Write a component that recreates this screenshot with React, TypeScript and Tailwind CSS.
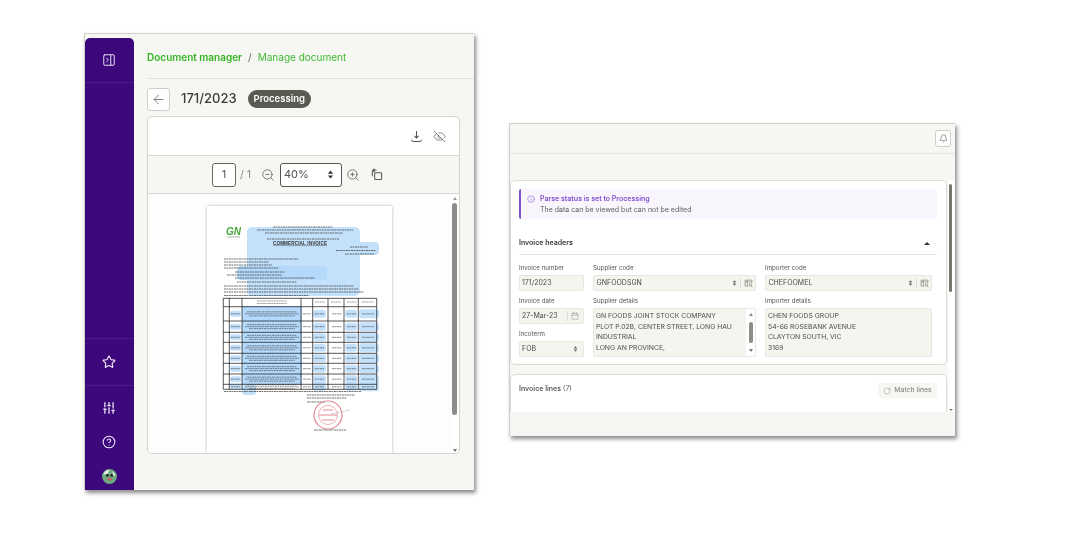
import { ArrowLeft, Bell, Calendar, CircleHelp, EyeOff, Info, PanelRightClose, RotateCw, SlidersVertical, Star, ZoomIn, ZoomOut } from 'lucide-react';

const ROW_Y = [92.3, 100.7, 115, 126.3, 136.3, 147.3, 157.3, 168, 178.3, 183.3];
const COL_X = [16.3, 22.3, 35, 94, 105.7, 121, 137, 151.3, 169.7];

function Updown({ className = '' }: { className?: string }) {
  return (
    <svg viewBox="0 0 8 10" className={className} fill="currentColor">
      <path d="M4 0.5 7 4H1zM4 9.5 1 6h6z" />
    </svg>
  );
}

function Lookup() {
  return (
    <svg viewBox="0 0 12 12" className="w-[9px] h-[9px] text-[#8a8a82]" fill="none" stroke="currentColor" strokeWidth="1">
      <path d="M10.5 5V1.5h-9v8H5M1.5 4h9M4.5 1.5v8" />
      <circle cx="8.5" cy="8" r="1.7" />
      <path d="m10 9.5 1.4 1.4" />
    </svg>
  );
}

function InvoicePage() {
  const lines: [number, number, number][] = [
    [66, 21, 60], [50, 24, 96], [58, 27, 78], [60, 33, 72],
    [143, 41, 18], [129, 44.5, 40], [138, 48, 30],
    [17, 53, 75], [17, 56, 45], [17, 59, 48], [17, 62, 55],
    [28, 66, 50], [20, 69, 55], [28, 72, 80], [30, 76, 60],
    [17, 80, 130], [17, 83, 135], [17, 86, 140], [17, 89.5, 85],
    [17, 185.5, 137], [100, 189, 48], [100, 192, 40], [100, 196, 18], [107, 224, 32],
  ];
  const rowMid = ROW_Y.slice(1, 9).map((y, i) => (y + ROW_Y[i + 2]) / 2);
  return (
    <svg viewBox="0 0 185 248" className="w-[185px] h-[248px] shrink-0 blur-[0.4px]">
      <rect width="185" height="248" fill="#fff" />
      <rect x="40" y="21" width="113" height="69" rx="5" fill="#c3e1fb" />
      <rect x="151" y="36" width="21" height="13" rx="4" fill="#c3e1fb" />
      <rect x="30" y="60" width="90" height="14" rx="4" fill="#b4d9fb" />
      <rect x="35" y="100" width="60" height="79" fill="#b4d9fb" />
      <rect x="35" y="179" width="14" height="10" rx="3" fill="#c3e1fb" />
      {rowMid.map(y => (
        <g key={y} fill="#c3e1fb">
          <rect x="106" y={y - 4} width="13" height="8" rx="3" />
          <rect x="138" y={y - 4} width="12" height="8" rx="3" />
          <rect x="152" y={y - 4.5} width="20" height="9" rx="3" />
          <rect x="23" y={y - 3} width="11" height="6" rx="2" />
        </g>
      ))}
      <text x="19" y="29" fontFamily="Liberation Sans" fontSize="10" fontStyle="italic" fontWeight="700" fill="#4aa63e">GN</text>
      <path d="M20 31h13" stroke="#7a9a80" strokeWidth=".7" />
      <text x="66" y="38.5" fontFamily="Liberation Sans" fontSize="4.6" fontWeight="700" fill="#333" textLength="54">COMMERCIAL INVOICE</text>
      <path d="M66 39.6h54" stroke="#333" strokeWidth=".4" />
      {lines.map(([x, y, w]) => (
        <path key={`${x}-${y}`} d={`M${x} ${y}h${w}`} stroke="#333" strokeWidth=".9" strokeDasharray="2.5 .4 1.5 .6" opacity=".75" />
      ))}
      <path d="M50 95h30M50 97.5h30M108 96h10M124 96h10M140 96h9M155 96h12" stroke="#444" strokeWidth=".8" strokeDasharray="2 .4" opacity=".6" />
      {ROW_Y.map(y => <path key={y} d={`M16.3 ${y}H169.7`} stroke="#111" strokeWidth=".7" />)}
      {COL_X.map(x => <path key={x} d={`M${x} 92.3V183.3`} stroke="#111" strokeWidth=".7" />)}
      {rowMid.map(y => (
        <g key={y} stroke="#333" strokeWidth=".8" opacity=".7" strokeDasharray="2.5 .4 1.5 .6">
          <path d={`M40 ${y - 2}h50M38 ${y}h54M42 ${y + 2}h46`} />
          <path d={`M24 ${y}h9M96 ${y}h8M108 ${y}h9M125 ${y}h10M140 ${y}h9M155 ${y}h12`} />
        </g>
      ))}
      <g fill="none" stroke="#e58b92">
        <circle cx="121" cy="209" r="14" strokeWidth="1.2" />
        <circle cx="121" cy="209" r="9.5" strokeWidth=".7" />
        <path d="M112 209h18M116 204h10M115 214h12" strokeWidth="1" />
        <path d="M124 208 143 204" stroke="#aab" strokeWidth=".5" />
      </g>
    </svg>
  );
}

function Field({ label, children, className = '' }: { label: string; children: React.ReactNode; className?: string }) {
  return (
    <div className={className}>
      <div className="text-[6.2px] leading-[10px] text-[#55554f] mb-[2px]">{label}</div>
      {children}
    </div>
  );
}

const boxCls = 'h-[16px] bg-[#f5f5f0] border border-[#e8e8e2] rounded-[2px] flex items-center text-[7px] text-[#4c4c47] px-[2px]';

function CodeBox({ value }: { value: string }) {
  return (
    <div className={boxCls}>
      <span className="flex-1 pl-[0.5px]">{value}</span>
      <Updown className="w-[5px] h-[6px] text-[#66665f] mr-[3px]" />
      <span className="w-px h-[10px] bg-[#dcdcd5] mr-[3px]" />
      <Lookup />
    </div>
  );
}

export default function App() {
  return (
    <div className="relative w-[1092px] h-[539px] bg-white overflow-hidden blur-[0.25px]" style={{ fontFamily: 'Inter, "Noto Sans", sans-serif' }}>

      {/* LEFT WINDOW - document viewer */}
      <div className="absolute left-[84px] top-[33px] w-[390px] h-[457px] bg-[#f6f6f2] border-t border-l border-[#cfcfcb] shadow-[2px_3px_4px_rgba(0,0,0,.45)] flex overflow-hidden">
        <aside className="w-[49px] mt-[4px] bg-[#3c087c] rounded-t-[5px] flex flex-col items-center text-[#efe8f8] shrink-0">
          <div className="h-[45px] w-full flex items-center justify-center border-b border-[#4c1c8a]">
            <PanelRightClose size={14} strokeWidth={1.6} className="mr-[1px]" />
          </div>
          <div className="flex-1" />
          <div className="h-[48px] w-full flex items-center justify-center border-t border-[#4c1c8a] border-b">
            <Star size={14} strokeWidth={2} className="mr-[2px]" />
          </div>
          <div className="h-[104px] w-full flex flex-col items-center justify-between pt-[15px] pb-[6px]">
            <SlidersVertical size={14} strokeWidth={2.2} className="mr-[2px]" />
            <CircleHelp size={14} strokeWidth={1.8} className="mr-[2px]" />
            <svg viewBox="0 0 14 14" className="w-[15px] h-[15px]">
              <circle cx="7" cy="7" r="7" fill="#6fa97f" />
              <path d="M1 5q3-5 6-4l-2 4zM10 2l3 4-3 0z" fill="#eef0ee" />
              <circle cx="5" cy="6" r="1.3" fill="#222" />
              <circle cx="9" cy="6" r="1.3" fill="#222" />
              <ellipse cx="7" cy="9.5" rx="2" ry="1.3" fill="#c9606a" />
            </svg>
          </div>
        </aside>

        <div className="flex-1 min-w-0 pl-[13px] flex flex-col">
          <div className="h-[45px] pt-[3px] flex items-center gap-[6px] text-[10px] shrink-0 border-b border-[#e3e3de]">
            <span className="font-semibold text-[#34b524]">Document manager</span>
            <span className="text-[#66665f]">/</span>
            <span className="text-[#3fba32]">Manage document</span>
          </div>

          <div className="h-[37px] flex items-center shrink-0 pt-[3px]">
            <button className="w-[23px] h-[23px] bg-white border border-[#cfcfc8] rounded-[3px] flex items-center justify-center text-[#66665f]">
              <ArrowLeft size={15} strokeWidth={1.3} />
            </button>
            <span className="ml-[11px] text-[13px] font-medium text-[#3a3a36]">171/2023</span>
            <span className="ml-[11px] h-[18px] px-[6px] rounded-full bg-[#5a5a53] text-white text-[9.5px] font-semibold flex items-center">Processing</span>
          </div>

          <div className="w-[313px] h-[338px] bg-white border border-[#d4d4ce] rounded-[5px] overflow-hidden flex flex-col shrink-0">
            <div className="h-[39px] flex items-center justify-end gap-[10px] pr-[13px] border-b border-[#d8d8d2] shrink-0 text-[#55554f]">
              <svg viewBox="0 0 14 14" className="w-[13px] h-[13px]" fill="none" stroke="currentColor" strokeWidth="1.1">
                <path d="M7 1v7.5M4.8 6.4 7 8.6l2.2-2.2M1.5 10.5q.5 2 2.5 2h6q2 0 2.5-2" />
              </svg>
              <EyeOff size={13} strokeWidth={1.3} />
            </div>
            <div className="h-[38px] bg-[#f6f6f2] flex items-center pl-[64px] border-b border-[#d8d8d2] shrink-0 text-[#55554f]">
              <div className="w-[24px] h-[24px] bg-white border border-[#66665f] rounded-[3px] flex items-center justify-center text-[11px]">1</div>
              <span className="ml-[4px] text-[10.5px] text-[#8a8a82]">/ 1</span>
              <ZoomOut size={14} strokeWidth={1.3} className="ml-[10px]" />
              <div className="ml-[5px] w-[62px] h-[24px] bg-white border border-[#55554f] rounded-[3px] flex items-center justify-between pl-[3px] pr-[7px] text-[11px]">
                40%
                <Updown className="w-[7px] h-[9px] text-[#33332f]" />
              </div>
              <ZoomIn size={14} strokeWidth={1.3} className="ml-[4px]" />
              <svg viewBox="0 0 14 14" className="w-[13px] h-[13px] ml-[10px]" fill="none" stroke="currentColor" strokeWidth="1.1">
                <rect x="5" y="5" width="7.5" height="7.5" rx="1" />
                <path d="M2.5 9V4q0-1.5 1.5-1.5h3M5 .8 3 2.5l2 1.7" />
              </svg>
            </div>
            <div className="flex-1 min-h-0 flex overflow-hidden">
              <div className="flex-1 pt-[12px] flex justify-center bg-[#fdfdfd]">
                <div className="h-[248px] shadow-[0_0_3px_rgba(0,0,0,.28)]">
                  <InvoicePage />
                </div>
              </div>
              <div className="w-[8px] relative shrink-0">
                <div className="absolute left-[2px] top-[3px] w-0 h-0 border-x-[2px] border-x-transparent border-b-[3px] border-b-[#999]" />
                <div className="absolute left-[1px] top-[9px] w-[5px] h-[212px] rounded-full bg-[#8c8c88]" />
                <div className="absolute left-[2px] bottom-[1px] w-0 h-0 border-x-[2px] border-x-transparent border-t-[3px] border-t-[#777]" />
              </div>
            </div>
          </div>
        </div>
      </div>

      {/* RIGHT WINDOW - invoice form */}
      <div className="absolute left-[509px] top-[123px] w-[446px] h-[313px] bg-[#f6f6f2] border-t border-l border-[#cfcfcb] shadow-[2px_3px_4px_rgba(0,0,0,.45)] flex flex-col overflow-hidden">
        <div className="h-[30px] shrink-0 flex items-center justify-end pr-[4px] border-b border-[#e6e6e0]">
          <button className="w-[16px] h-[17px] bg-white border border-[#cfcfc8] rounded-[3px] flex items-center justify-center text-[#55554f]">
            <Bell size={9} strokeWidth={1.5} />
          </button>
        </div>
        <div className="h-[26px] shrink-0" />

        <div className="flex-1 min-h-0 flex">
          <div className="w-[437px] shrink-0 flex flex-col gap-[9px]">
            <section className="h-[185px] bg-white border border-[#dcdcd6] rounded-[5px] shrink-0 pl-[8px] pr-[9px] pt-[8px]">
              <div className="h-[30px] bg-[#f8f5fd] border-l-2 border-[#8450d0] rounded-[2px] pl-[6px] pt-[5px]">
                <div className="flex items-center gap-[5px] text-[7px] leading-[10px] font-semibold text-[#8450d0]">
                  <Info size={8} strokeWidth={1.5} />
                  Parse status is set to Processing
                </div>
                <div className="pl-[13px] mt-[1px] text-[7px] leading-[10px] text-[#5e5e58]">The data can be viewed but can not be edited</div>
              </div>
              <div className="h-[36px] flex items-end justify-between border-b border-[#e6e6e0] mb-[8px] pr-[7px] pb-[6px]">
                <span className="text-[7px] leading-[10px] font-semibold text-[#3a3a36]">Invoice headers</span>
                <span className="w-0 h-0 mb-[3px] border-x-[3px] border-x-transparent border-b-[3px] border-b-[#33332f]" />
              </div>
              <div className="flex gap-[9px]">
                <div className="w-[65px] shrink-0 flex flex-col gap-[5px]">
                  <Field label="Invoice number">
                    <div className={boxCls}>171/2023</div>
                  </Field>
                  <Field label="Invoice date">
                    <div className={boxCls}>
                      <span className="flex-1">27-Mar-23</span>
                      <span className="w-px h-[10px] bg-[#dcdcd5] mr-[3px]" />
                      <Calendar size={8} strokeWidth={1.2} className="text-[#77776f] mr-[2px]" />
                    </div>
                  </Field>
                  <Field label="Incoterm">
                    <div className={boxCls}>
                      <span className="flex-1">FOB</span>
                      <Updown className="w-[5px] h-[6px] text-[#66665f] mr-[3px]" />
                    </div>
                  </Field>
                </div>
                <div className="w-[163px] shrink-0 flex flex-col gap-[5px]">
                  <Field label="Supplier code">
                    <CodeBox value="GNFOODSGN" />
                  </Field>
                  <Field label="Supplier details">
                    <div className="h-[49px] bg-[#f5f5f0] border border-[#e8e8e2] rounded-[2px] flex text-[6.8px] leading-[10.6px] text-[#4c4c47]">
                      <div className="flex-1 pl-[2px] pt-[2px] whitespace-nowrap overflow-hidden">
                        GN FOODS JOINT STOCK COMPANY<br />PLOT P.02B, CENTER STREET, LONG HAU<br />INDUSTRIAL<br />LONG AN PROVINCE,
                      </div>
                      <div className="w-[9px] bg-white flex flex-col items-center justify-between py-[4px] shrink-0">
                        <span className="w-0 h-0 border-x-[2px] border-x-transparent border-b-[3px] border-b-[#888]" />
                        <span className="w-[4px] h-[21px] rounded-full bg-[#8c8c88]" />
                        <span className="w-0 h-0 border-x-[2px] border-x-transparent border-t-[3px] border-t-[#777]" />
                      </div>
                    </div>
                  </Field>
                </div>
                <div className="w-[167px] shrink-0 flex flex-col gap-[5px]">
                  <Field label="Importer code">
                    <CodeBox value="CHEFOOMEL" />
                  </Field>
                  <Field label="Importer details">
                    <div className="h-[49px] bg-[#f5f5f0] border border-[#e8e8e2] rounded-[2px] text-[6.8px] leading-[10.6px] text-[#4c4c47] pl-[2px] pt-[2px]">
                      CHEN FOODS GROUP<br />54-66 ROSEBANK AVENUE<br />CLAYTON SOUTH, VIC<br />3169
                    </div>
                  </Field>
                </div>
              </div>
            </section>

            <section className="h-[60px] bg-white border border-[#dcdcd6] rounded-t-[5px] shrink-0 pl-[8px] pr-[9px] pt-[8px] flex items-start justify-between">
              <span className="text-[7px] leading-[12px] font-semibold text-[#5e5e58]">Invoice lines <span className="font-normal">(7)</span></span>
              <button className="h-[15px] w-[59px] bg-[#f6f6f2] rounded-[2px] flex items-center justify-center gap-[3px] text-[6.8px] font-medium text-[#8a8a82]">
                <RotateCw size={8} strokeWidth={1.3} />
                Match lines
              </button>
            </section>
          </div>
          <div className="w-[6px] relative shrink-0 ml-[1px] h-[232px] bg-white">
            <div className="absolute left-[1px] top-[4px] w-[3px] h-[108px] rounded-full bg-[#77776f]" />
            <div className="absolute left-[1px] top-[229px] w-0 h-0 border-x-[2px] border-x-transparent border-t-[2px] border-t-[#777]" />
          </div>
        </div>
        <div className="absolute left-0 right-0 bottom-0 h-[24px] bg-[#f6f6f2]" />
      </div>
    </div>
  );
}
